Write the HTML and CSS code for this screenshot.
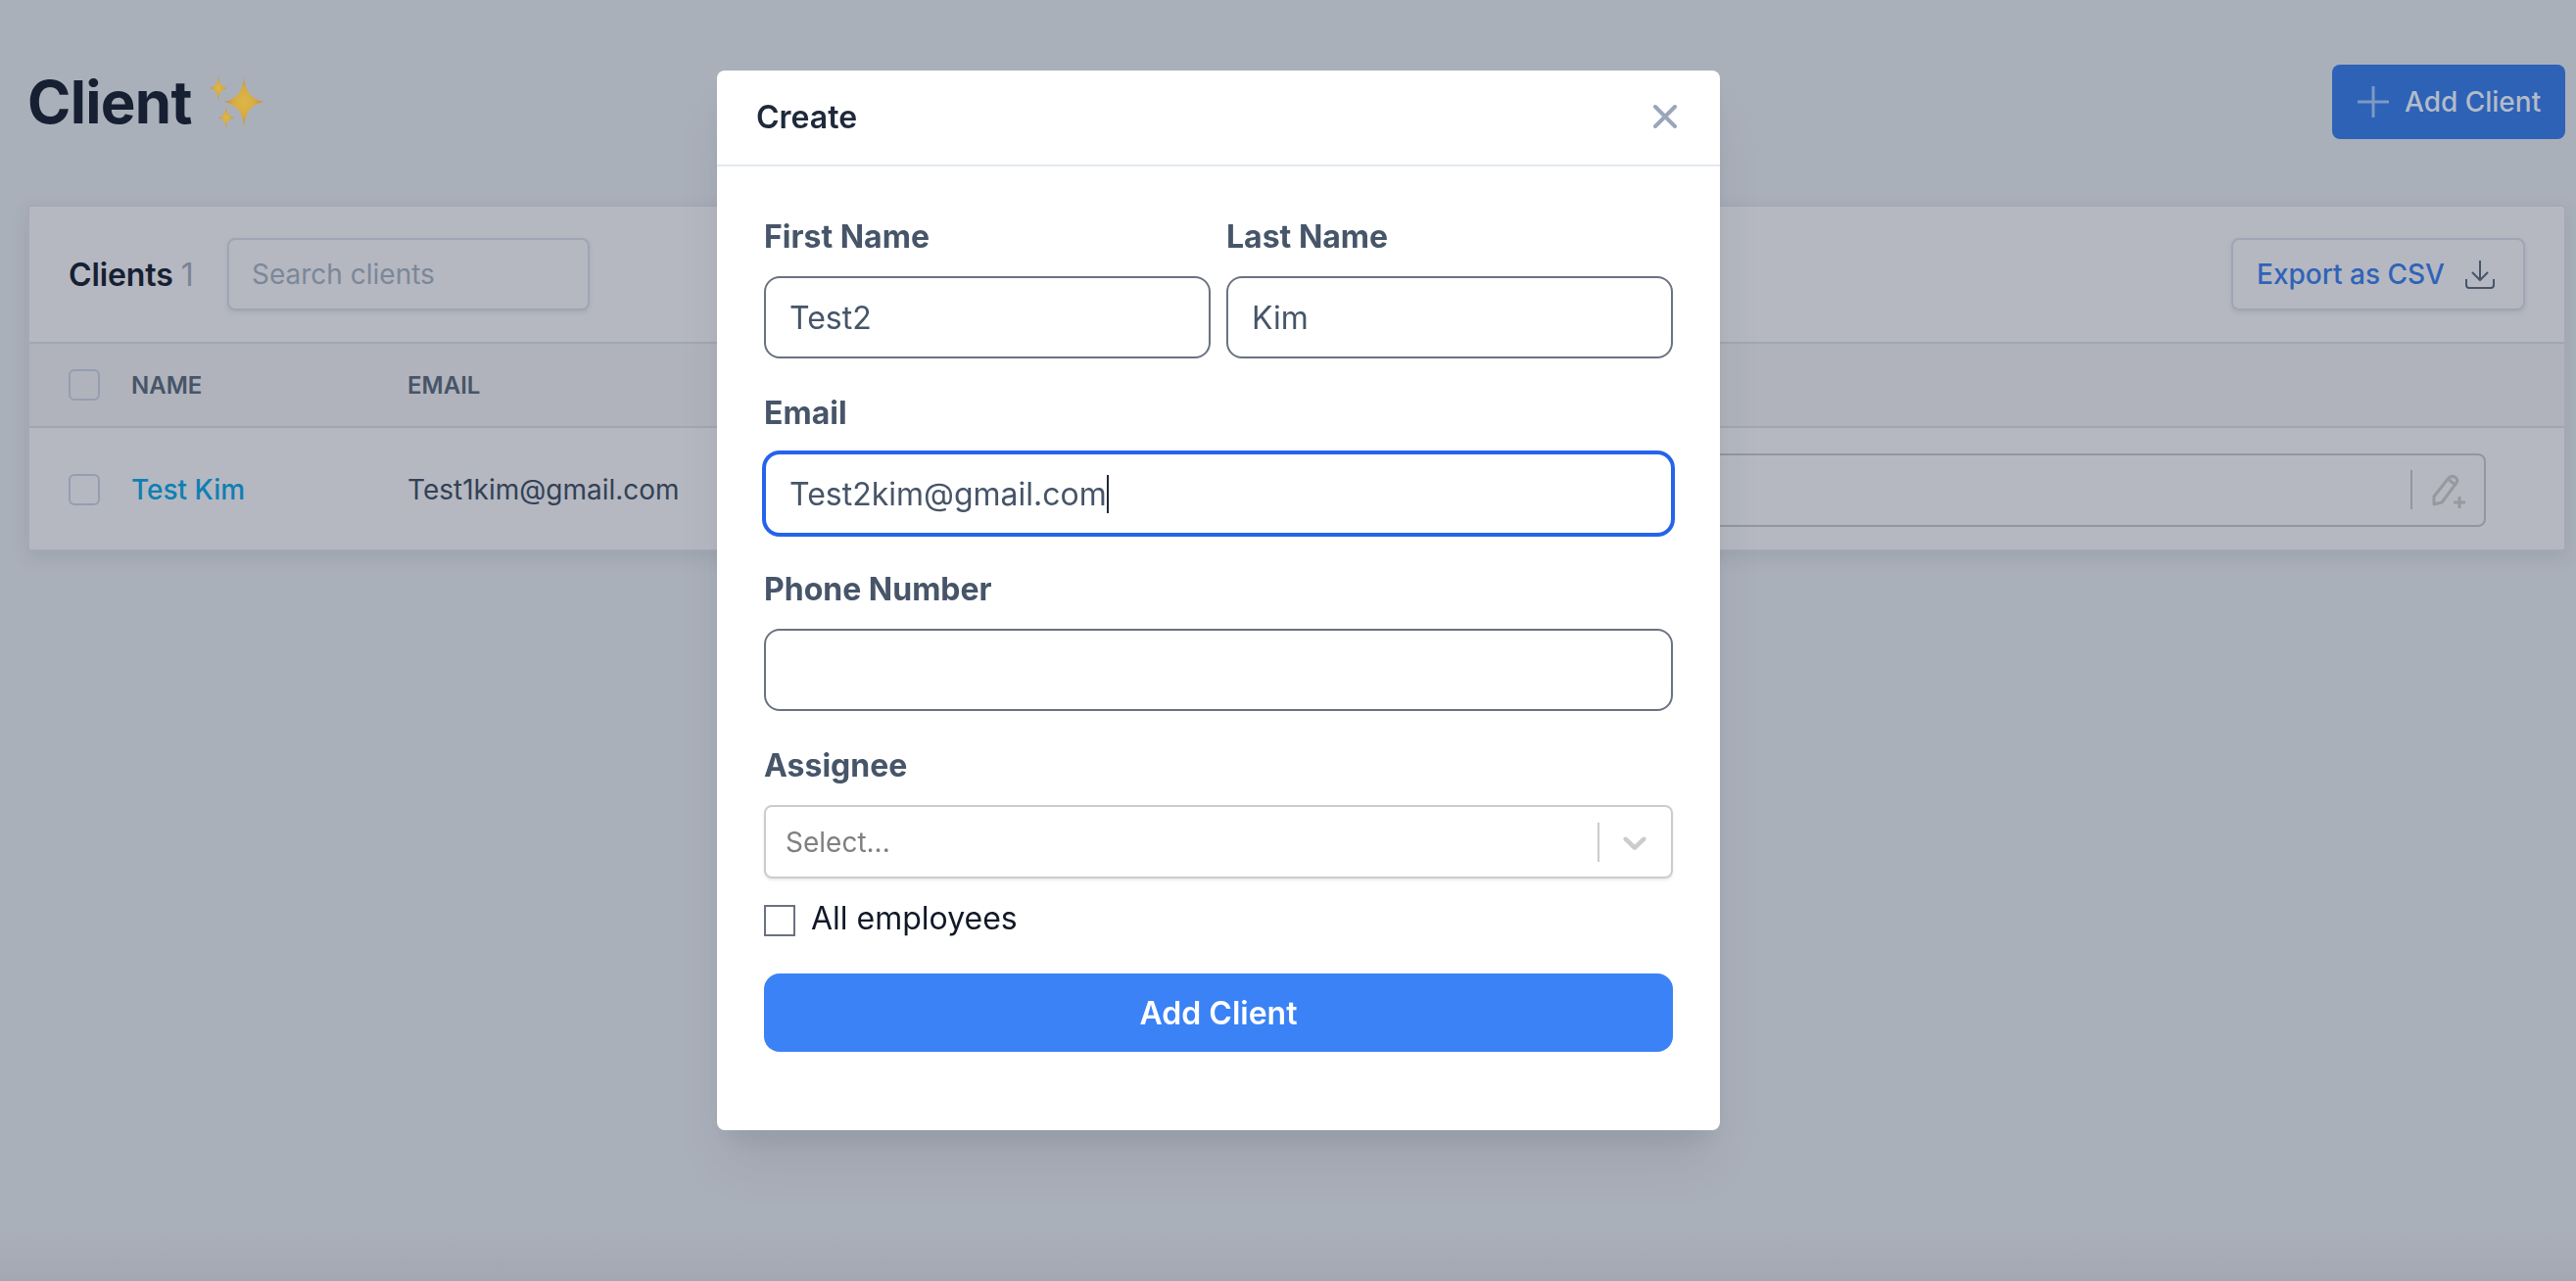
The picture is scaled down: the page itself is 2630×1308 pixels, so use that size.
FILE: index.html
```html
<!DOCTYPE html>
<html lang="en">
<head>
<meta charset="utf-8">
<title>Client</title>
<link rel="stylesheet" href="styles.css">
</head>
<body>
<main class="page">
  <header class="page-head">
    <div class="title-wrap">
      <h1 class="title">Client</h1>
      <svg class="sparkles" viewBox="0 0 64 60" aria-hidden="true">
        <defs>
          <radialGradient id="gold" cx="50%" cy="50%" r="55%">
            <stop offset="0" stop-color="#dcb848"/>
            <stop offset="0.5" stop-color="#d6ab42"/>
            <stop offset="1" stop-color="#c47f40"/>
          </radialGradient>
        </defs>
        <path fill="url(#gold)" d="M38 4Q39 26 58 30Q39 34 38 56Q37 34 18 30Q37 26 38 4Z"/>
        <path fill="url(#gold)" d="M12 4Q12.800 14.500 21 16Q12.800 17.500 12 28Q11.200 17.500 3 16Q11.200 14.500 12 4Z"/>
        <path fill="url(#gold)" d="M20 35Q20.800 44.500 28 46Q20.800 47.500 20 57Q19.200 47.500 12 46Q19.200 44.500 20 35Z"/>
      </svg>
    </div>
    <button class="add-btn" type="button">
      <svg class="add-plus" viewBox="0 0 32 32" aria-hidden="true"><path d="M16 1V31M1 16H31"/></svg>
      <span>Add Client</span>
    </button>
  </header>

  <section class="card">
    <div class="card-head">
      <div class="card-title">Clients <span class="count">1</span></div>
      <input class="search" type="text" placeholder="Search clients">
      <button class="export" type="button">
        <span>Export as CSV</span>
        <svg class="export-icon" viewBox="0 0 30 30" aria-hidden="true"><path d="M15 1V21M7 13L15 21L23 13M1 20V26Q1 29 4 29H26Q29 29 29 26V20"/></svg>
      </button>
    </div>
    <div class="table-head">
      <span class="check"></span>
      <span class="col-name">Name</span>
      <span class="col-email">Email</span>
    </div>
    <div class="table-row">
      <span class="check"></span>
      <a class="col-name client-link">Test Kim</a>
      <span class="col-email email-cell">Test1kim@gmail.com</span>
      <div class="note-box">
        <span class="note-divider"></span>
        <svg class="note-icon" viewBox="0 0 40 40" aria-hidden="true">
          <path d="M5 24L20 5Q23 2 27 4.500Q30 7 28 10L13 30L5 32Z"/>
          <path d="M20.500 6.500Q24 11 27 11"/>
          <path d="M31 24V36M25 30H37"/>
        </svg>
      </div>
    </div>
  </section>
</main>

<div class="backdrop">
  <div class="modal">
    <div class="modal-head">
      <h2 class="modal-title">Create</h2>
      <svg class="close" viewBox="0 0 24 24" aria-hidden="true"><path d="M2 2L22 22M22 2L2 22"/></svg>
    </div>
    <form class="modal-body">
      <div class="name-grid">
        <div class="group">
          <label class="label">First Name</label>
          <input class="field" type="text" value="Test2">
        </div>
        <div class="group">
          <label class="label">Last Name</label>
          <input class="field" type="text" value="Kim">
        </div>
      </div>
      <div class="group">
        <label class="label">Email</label>
        <div class="field field-focus"><span>Test2kim@gmail.com</span><span class="caret"></span></div>
      </div>
      <div class="group">
        <label class="label">Phone Number</label>
        <input class="field" type="text">
      </div>
      <label class="label">Assignee</label>
      <div class="select">
        <span class="select-text">Select...</span>
        <span class="select-divider"></span>
        <svg class="select-chevron" viewBox="0 0 20 20" aria-hidden="true"><path d="M4.516 7.548c0.436-0.446 1.043-0.481 1.576 0l3.908 3.747 3.908-3.747c0.533-0.481 1.141-0.446 1.574 0 0.436 0.445 0.408 1.197 0 1.615-0.406 0.418-4.695 4.502-4.695 4.502-0.217 0.223-0.502 0.335-0.787 0.335s-0.57-0.112-0.789-0.335c0 0-4.287-4.084-4.695-4.502s-0.436-1.17 0-1.615z"/></svg>
      </div>
      <div class="all-row">
        <span class="all-box"></span>
        <span class="all-text">All employees</span>
      </div>
      <button class="submit" type="button">Add Client</button>
    </form>
  </div>
</div>
</body>
</html>
```

FILE: styles.css
```css
* { box-sizing: border-box; }

html, body {
  margin: 0;
  height: 100%;
  overflow: hidden;
}

body {
  background: #aab0ba;
  font-family: Inter, "Liberation Sans", sans-serif;
  color: #334155;
}

.page {
  padding: 66px 11px 0 28px;
}

.page-head {
  display: flex;
  justify-content: space-between;
  align-items: center;
  height: 76px;
}

.title-wrap {
  display: flex;
  align-items: center;
  gap: 15px;
}

.title {
  margin: 0;
  font-size: 60px;
  line-height: 76px;
  font-weight: 700;
  letter-spacing: -0.7px;
  color: #162032;
}

.sparkles {
  width: 64px;
  height: 60px;
}

.add-btn {
  display: flex;
  align-items: center;
  gap: 16px;
  width: 238px;
  height: 76px;
  padding: 0 0 0 26px;
  border: 0;
  border-radius: 8px;
  background: #2d62b7;
  color: #b4bbc8;
  font: 500 28px Inter, sans-serif;
}

.add-plus {
  width: 32px;
  height: 32px;
  fill: none;
  stroke: #7f98c6;
  stroke-width: 3;
  stroke-linecap: round;
}

.card {
  margin-top: 67px;
  margin-right: -1px;
  border: 2px solid #a5a9b6;
  border-radius: 4px;
  background: #b5b8c1;
  box-shadow: 0 6px 18px rgba(60, 65, 80, 0.12);
}

.card-head {
  display: flex;
  align-items: center;
  height: 140px;
  padding: 0 40px 0 40px;
  border-bottom: 2px solid #a2a6b4;
}

.card-title {
  width: 162px;
  font-size: 32px;
  font-weight: 600;
  letter-spacing: -0.1px;
  color: #162032;
  white-space: nowrap;
}

.count {
  font-weight: 400;
  color: #7b8494;
}

.search {
  width: 370px;
  height: 74px;
  padding: 0 23px;
  border: 2px solid #a0a4b4;
  border-radius: 8px;
  background: transparent;
  box-shadow: 0 2px 4px rgba(60, 65, 80, 0.12);
  font: 400 28px Inter, sans-serif;
  color: #334155;
}

.search::placeholder {
  color: #7c8798;
  opacity: 1;
}

.export {
  display: flex;
  align-items: center;
  gap: 21px;
  width: 300px;
  height: 74px;
  margin-left: auto;
  padding: 0 0 0 24px;
  border: 2px solid #a0a4b4;
  border-radius: 8px;
  background: transparent;
  box-shadow: 0 2px 4px rgba(60, 65, 80, 0.12);
  font: 500 28px Inter, sans-serif;
  color: #2f63b8;
  white-space: nowrap;
}

.export-icon {
  width: 30px;
  height: 30px;
  fill: none;
  stroke: #475569;
  stroke-width: 2;
}

.table-head,
.table-row {
  display: flex;
  align-items: center;
  padding-left: 40px;
}

.table-head {
  height: 86px;
  border-bottom: 2px solid #a2a6b4;
  background: #b0b3bc;
  font-size: 24px;
  font-weight: 600;
  color: #475569;
  text-transform: uppercase;
}

.table-row {
  height: 124px;
  padding-top: 2px;
  font-size: 28px;
}

.check {
  flex: none;
  width: 32px;
  height: 32px;
  margin-right: 32px;
  border: 2px solid #959db0;
  border-radius: 6px;
}

.col-name {
  flex: none;
  width: 282px;
}

.col-email {
  flex: none;
}

.client-link {
  font-weight: 500;
  color: #0e7fb5;
}

.email-cell {
  color: #334155;
}

.note-box {
  display: flex;
  align-items: center;
  width: 1200px;
  height: 75px;
  margin-left: auto;
  margin-right: 80px;
  padding-left: 1121px;
  border: 2px solid #93969f;
  border-radius: 8px;
}

.note-divider {
  flex: none;
  width: 2px;
  height: 40px;
  background: #93969f;
}

.note-icon {
  flex: none;
  width: 40px;
  height: 40px;
  margin-left: 17px;
  margin-top: 6px;
  fill: none;
  stroke: #96999f;
  stroke-width: 3;
  stroke-linejoin: round;
}

.backdrop {
  position: fixed;
  inset: 0;
  display: flex;
  justify-content: flex-start;
  align-items: flex-start;
  padding: 72px 0 0 732px;
  background: linear-gradient(to bottom, rgba(120, 122, 138, 0) 96%, rgba(120, 122, 138, 0.14) 100%);
}

.modal {
  width: 1024px;
  height: 1082px;
  border-radius: 8px;
  background: #fff;
  box-shadow: 0 40px 50px -10px rgba(40, 45, 60, 0.1), 0 16px 24px -8px rgba(40, 45, 60, 0.08);
}

.modal-head {
  display: flex;
  justify-content: space-between;
  align-items: center;
  height: 98px;
  padding: 0 44px 2px 40px;
  border-bottom: 2px solid #e2e8f0;
}

.modal-title {
  margin: 0;
  font-size: 32px;
  font-weight: 600;
  color: #1e293b;
}

.close {
  width: 24px;
  height: 24px;
  fill: none;
  stroke: #9aa7ba;
  stroke-width: 4;
  stroke-linecap: round;
}

.modal-body {
  display: flex;
  flex-direction: column;
  padding: 48px 48px 0;
}

.name-grid {
  display: grid;
  grid-template-columns: 1fr 1fr;
  gap: 16px;
}

.group {
  display: flex;
  flex-direction: column;
  margin-bottom: 32px;
}

.label {
  margin-bottom: 16px;
  font-size: 32px;
  line-height: 48px;
  font-weight: 700;
  color: #475569;
}

.field {
  display: flex;
  align-items: center;
  width: 100%;
  height: 84px;
  padding: 0 24px;
  border: 2px solid #6b7280;
  border-radius: 16px;
  background: #fff;
  font: 400 32px Inter, sans-serif;
  color: #475569;
}

.field-focus {
  border: 2px solid #2563eb;
  box-shadow: 0 0 0 2px #2563eb;
  outline: 0;
}

.caret {
  flex: none;
  width: 2px;
  height: 39px;
  background: #1e293b;
}

.select {
  display: flex;
  align-items: center;
  height: 75px;
  padding-left: 20px;
  border: 2px solid #cccccc;
  border-radius: 8px;
  box-shadow: 0 2px 3px rgba(0, 0, 0, 0.08);
}

.select-text {
  flex: 1;
  font-size: 28px;
  color: #808080;
}

.select-divider {
  flex: none;
  width: 2px;
  height: 40px;
  background: #cccccc;
}

.select-chevron {
  flex: none;
  width: 40px;
  height: 40px;
  margin: 0 17px 0 16px;
  fill: #cccccc;
}

.all-row {
  display: flex;
  align-items: flex-start;
  gap: 16px;
  margin-top: 27px;
}

.all-box {
  flex: none;
  width: 32px;
  height: 32px;
  border: 2px solid #6b7280;
}

.all-text {
  font-size: 32px;
  line-height: 28px;
  color: #111827;
}

.submit {
  height: 80px;
  margin-top: 38px;
  border: 0;
  border-radius: 16px;
  background: #3b82f6;
  color: #fff;
  font: 600 32px Inter, sans-serif;
}
```
